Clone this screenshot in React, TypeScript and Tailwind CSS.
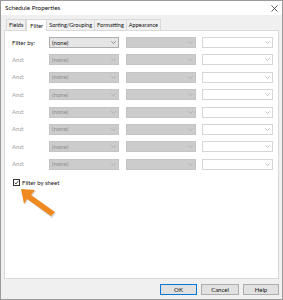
import React from "react";

const Chevron = ({ color = "#9a9a9a" }: { color?: string }) => (
  <svg width="5" height="3" viewBox="0 0 5 3" className="shrink-0">
    <path d="M0.3 0.3 L2.5 2.5 L4.7 0.3" fill="none" stroke={color} strokeWidth="0.7" />
  </svg>
);

const Combo = ({ kind, text }: { kind: "active" | "disabled" | "white"; text?: string }) => {
  const cls =
    kind === "active"
      ? "bg-[#e5e5e5] border-[#adadad] text-[#1a1a1a]"
      : kind === "disabled"
      ? "bg-[#cccccc] border-[#c4c4c4] text-[#8c8c8c]"
      : "bg-white border-[#d6d6d6] text-[#8c8c8c]";
  return (
    <div className={`flex items-center justify-between h-[11px] border px-[2px] ${cls}`}>
      <span className="leading-none">{text ?? ""}</span>
      <Chevron color={kind === "active" ? "#707070" : "#a8a8a8"} />
    </div>
  );
};

export default function App() {
  const rows = Array.from({ length: 8 }, (_, i) => i);
  return (
    <div
      className="relative w-[283px] h-[300px] flex flex-col bg-[#f0f0f0] border border-[#9a9a9a] text-[6px] leading-[8px] overflow-hidden"
      style={{ fontFamily: 'Lato, "Noto Sans", sans-serif' }}
    >
      <div className="h-[14px] bg-white flex items-center justify-between pl-[4px] pr-[4px] shrink-0">
        <span className="text-[6.3px] text-[#111]">Schedule Properties</span>
        <svg width="7" height="7" viewBox="0 0 7 7">
          <path d="M0.5 0.5 L6.5 6.5 M6.5 0.5 L0.5 6.5" stroke="#333" strokeWidth="0.8" />
        </svg>
      </div>
      <div className="h-[3px] shrink-0" />
      <div className="flex items-end h-[12px] pl-[5px] text-[#111] text-[5.6px] shrink-0">
        <div className="h-[11px] px-[2px] flex items-center border border-b-0 border-[#d9d9d9] bg-[#f0f0f0]">Fields</div>
        <div className="h-[12px] px-[3px] flex items-center border border-b-0 border-[#d9d9d9] bg-white -mb-px relative z-10">Filter</div>
        <div className="h-[11px] px-[2px] flex items-center border border-b-0 border-l-0 border-[#d9d9d9] bg-[#f0f0f0]">Sorting/Grouping</div>
        <div className="h-[11px] px-[2px] flex items-center border border-b-0 border-l-0 border-[#d9d9d9] bg-[#f0f0f0]">Formatting</div>
        <div className="h-[11px] px-[2px] flex items-center border border-b-0 border-l-0 border-[#d9d9d9] bg-[#f0f0f0]">Appearance</div>
      </div>
      <div className="flex-1 min-h-0 mx-[3px] bg-white border border-[#d9d9d9] pl-[7px] pt-[6px] flex flex-col">
        <div className="flex flex-col gap-[6.4px]">
          {rows.map((i) => (
            <div key={i} className="flex items-center">
              <span className={`w-[37px] ${i === 0 ? "text-[#111]" : "text-[#a0a0a0]"}`}>
                {i === 0 ? "Filter by:" : "And:"}
              </span>
              <div className="w-[70px]">
                <Combo kind={i === 0 ? "active" : "disabled"} text="(none)" />
              </div>
              <div className="w-[70px] ml-[7px]">
                <Combo kind="disabled" />
              </div>
              <div className="w-[71px] ml-[6px]">
                <Combo kind="white" />
              </div>
            </div>
          ))}
        </div>
        <div className="flex items-center mt-[9px] ml-[1px] gap-[2px]">
          <div className="w-[7px] h-[7px] border border-[#333] bg-white flex items-center justify-center">
            <svg width="5" height="5" viewBox="0 0 5 5">
              <path d="M0.6 2.6 L2 4 L4.5 0.8" fill="none" stroke="#222" strokeWidth="0.8" />
            </svg>
          </div>
          <span className="text-[#111]">Filter by sheet</span>
        </div>
      </div>
      <div className="flex justify-end gap-[4px] pt-[5px] pb-[4px] pr-[3px] shrink-0">
        <div className="w-[37px] h-[11px] border border-[#0078d7] bg-[#e1e1e1] flex items-center justify-center text-[#111]">OK</div>
        <div className="w-[38px] h-[11px] border border-[#adadad] bg-[#e1e1e1] flex items-center justify-center text-[#111]">Cancel</div>
        <div className="w-[36px] h-[11px] border border-[#adadad] bg-[#e1e1e1] flex items-center justify-center text-[#111]">Help</div>
      </div>
      <svg className="absolute left-[16px] top-[184px]" width="44" height="36" viewBox="0 0 44 36">
        <g transform="translate(1,1)" fill="#b0b0b0" opacity="0.5">
          <polygon points="4,4 18,5 14,10 38,27 34,32 10,14 7,19" />
        </g>
        <polygon points="4,4 18,5 14,10 38,27 34,31 10,14 7,19" fill="#ef8a21" />
      </svg>
    </div>
  );
}
